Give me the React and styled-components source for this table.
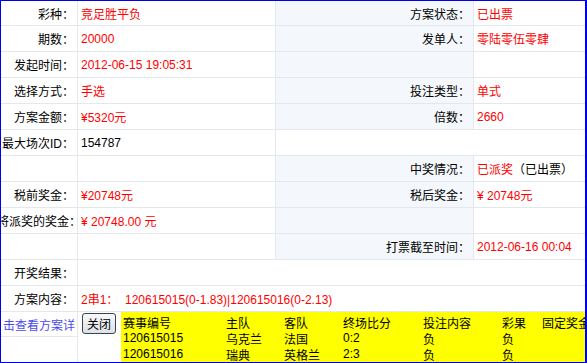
import React from "react";
import styled, { createGlobalStyle } from "styled-components";

const GlobalStyle = createGlobalStyle`
  html, body { margin: 0; padding: 0; background: #fff; }
  body {
    font-family: "Liberation Sans", "Noto Sans CJK SC", sans-serif;
    font-size: 12px;
    color: #000;
  }
  * { box-sizing: border-box; }
`;

const LINE = "#e4e7eb";

const Frame = styled.div`
  width: 587px;
  height: 363px;
  border: 1px solid #0000f0;
  border-right-width: 2px;
  background: #fff;
  overflow: hidden;
  display: flex;
  flex-direction: column;
`;

const InfoGrid = styled.div`
  display: grid;
  grid-template-columns: 77px 198px 198px 1fr;
  grid-template-rows: 25px repeat(11, 26px);
`;

const Cell = styled.div`
  grid-column: span ${(p) => p.$span || 1};
  border-bottom: 1px solid ${LINE};
  border-right: ${(p) => (p.$last ? "none" : `1px solid ${LINE}`)};
  background: ${(p) => (p.$shade ? "#f4f7fb" : "#fff")};
  display: flex;
  align-items: center;
  overflow: hidden;
  white-space: nowrap;
`;

const Label = styled(Cell)`
  justify-content: flex-end;
  padding-right: ${(p) => (p.$tight ? "0" : "3px")};
  color: #000;
`;

const Overhang = styled.span`
  margin-right: -4px;
  flex: none;
`;

const Value = styled(Cell)`
  justify-content: flex-start;
  padding-left: 3px;
`;

const Txt = styled.span`
  color: ${(p) => p.$c || "#ff0000"};
`;

const Bottom = styled.div`
  flex: 1;
  display: grid;
  grid-template-columns: 77px 1fr;
  grid-template-rows: 25px 1fr;
`;

const LinkCell = styled.div`
  border-right: 1px solid ${LINE};
  border-bottom: 1px solid ${LINE};
  display: flex;
  align-items: center;
  justify-content: center;
  overflow: hidden;
  white-space: nowrap;
`;

const PlainCell = styled.div`
  border-right: 1px solid ${LINE};
`;

const DetailLink = styled.a`
  color: #4a4af2;
  text-decoration: none;
  cursor: pointer;
`;

const ActionCell = styled.div`
  grid-column: 2;
  grid-row: 1 / span 2;
  display: flex;
  align-items: flex-start;
  min-width: 0;
`;

const CloseButton = styled.button`
  margin: 1px 5px 0 4px;
  width: 34px;
  height: 21px;
  padding: 0;
  border: 1px solid #3a4350;
  border-radius: 3px;
  background: linear-gradient(#f7f8fa, #dde2e8);
  font: inherit;
  font-size: 12px;
  color: #000;
  flex: none;
`;

const DetailBox = styled.div`
  flex: 1;
  align-self: stretch;
  background: #ffff00;
  overflow: hidden;
  padding: 2px 0 0 2px;
  display: grid;
  grid-template-columns: 103px 58px 59px 80px 79px 40px 80px;
  grid-auto-rows: 16px;
  white-space: nowrap;
`;

const DCell = styled.div`
  display: flex;
  align-items: center;
  color: #000;
`;

const rows = [
  [
    { t: "label", v: "彩种：" },
    { t: "value", v: [["竞足胜平负"]] },
    { t: "label", v: "方案状态：", shade: true },
    { t: "value", v: [["已出票"]], last: true },
  ],
  [
    { t: "label", v: "期数：" },
    { t: "value", v: [["20000"]] },
    { t: "label", v: "发单人：", shade: true },
    { t: "value", v: [["零陆零伍零肆"]], last: true },
  ],
  [
    { t: "label", v: "发起时间：" },
    { t: "value", v: [["2012-06-15 19:05:31"]] },
    { t: "label", v: "", shade: true },
    { t: "value", v: [], last: true },
  ],
  [
    { t: "label", v: "选择方式：" },
    { t: "value", v: [["手选"]] },
    { t: "label", v: "投注类型：", shade: true },
    { t: "value", v: [["单式"]], last: true },
  ],
  [
    { t: "label", v: "方案金额：" },
    { t: "value", v: [["¥5320元"]] },
    { t: "label", v: "倍数：", shade: true },
    { t: "value", v: [["2660"]], last: true },
  ],
  [
    { t: "label", v: "最大场次ID：" },
    { t: "value", v: [["154787", "#000"]] },
    { t: "value", v: [], span: 2, last: true },
  ],
  [
    { t: "label", v: "" },
    { t: "value", v: [] },
    { t: "label", v: "中奖情况：", shade: true },
    { t: "value", v: [["已派奖"], ["（已出票）", "#000"]], last: true },
  ],
  [
    { t: "label", v: "税前奖金：" },
    { t: "value", v: [["¥20748元"]] },
    { t: "label", v: "税后奖金：", shade: true },
    { t: "value", v: [["¥ 20748元"]], last: true },
  ],
  [
    { t: "label", v: "将派奖的奖金：", tight: true },
    { t: "value", v: [["¥ 20748.00 元"]] },
    { t: "label", v: "", shade: true },
    { t: "value", v: [], last: true },
  ],
  [
    { t: "label", v: "" },
    { t: "value", v: [] },
    { t: "label", v: "打票截至时间：", shade: true },
    { t: "value", v: [["2012-06-16 00:04"]], last: true },
  ],
  [
    { t: "label", v: "开奖结果：" },
    { t: "value", v: [], span: 3, last: true },
  ],
  [
    { t: "label", v: "方案内容：" },
    {
      t: "value",
      v: [["2串1：\u00a0\u00a0120615015(0-1.83)|120615016(0-2.13)"]],
      span: 3,
      last: true,
    },
  ],
];

const detail = [
  ["赛事编号", "主队", "客队", "终场比分", "投注内容", "彩果", "固定奖金"],
  ["120615015", "乌克兰", "法国", "0:2", "负", "负", ""],
  ["120615016", "瑞典", "英格兰", "2:3", "负", "负", ""],
];

export default function App() {
  return (
    <>
      <GlobalStyle />
      <Frame>
        <InfoGrid>
          {rows.map((row, ri) =>
            row.map((c, ci) =>
              c.t === "label" ? (
                <Label
                  key={`${ri}-${ci}`}
                  $shade={c.shade}
                  $span={c.span}
                  $tight={c.tight}
                >
                  {c.tight ? <Overhang>{c.v}</Overhang> : c.v}
                </Label>
              ) : (
                <Value
                  key={`${ri}-${ci}`}
                  $span={c.span}
                  $last={c.last}
                  $shade={c.shade}
                >
                  {c.v.map(([s, col], i) => (
                    <Txt key={i} $c={col}>
                      {s}
                    </Txt>
                  ))}
                </Value>
              )
            )
          )}
        </InfoGrid>
        <Bottom>
          <LinkCell>
            <DetailLink>击查看方案详</DetailLink>
          </LinkCell>
          <PlainCell />
          <ActionCell>
            <CloseButton type="button">关闭</CloseButton>
            <DetailBox>
              {detail.map((r, ri) =>
                r.map((s, ci) => <DCell key={`${ri}-${ci}`}>{s}</DCell>)
              )}
            </DetailBox>
          </ActionCell>
        </Bottom>
      </Frame>
    </>
  );
}
